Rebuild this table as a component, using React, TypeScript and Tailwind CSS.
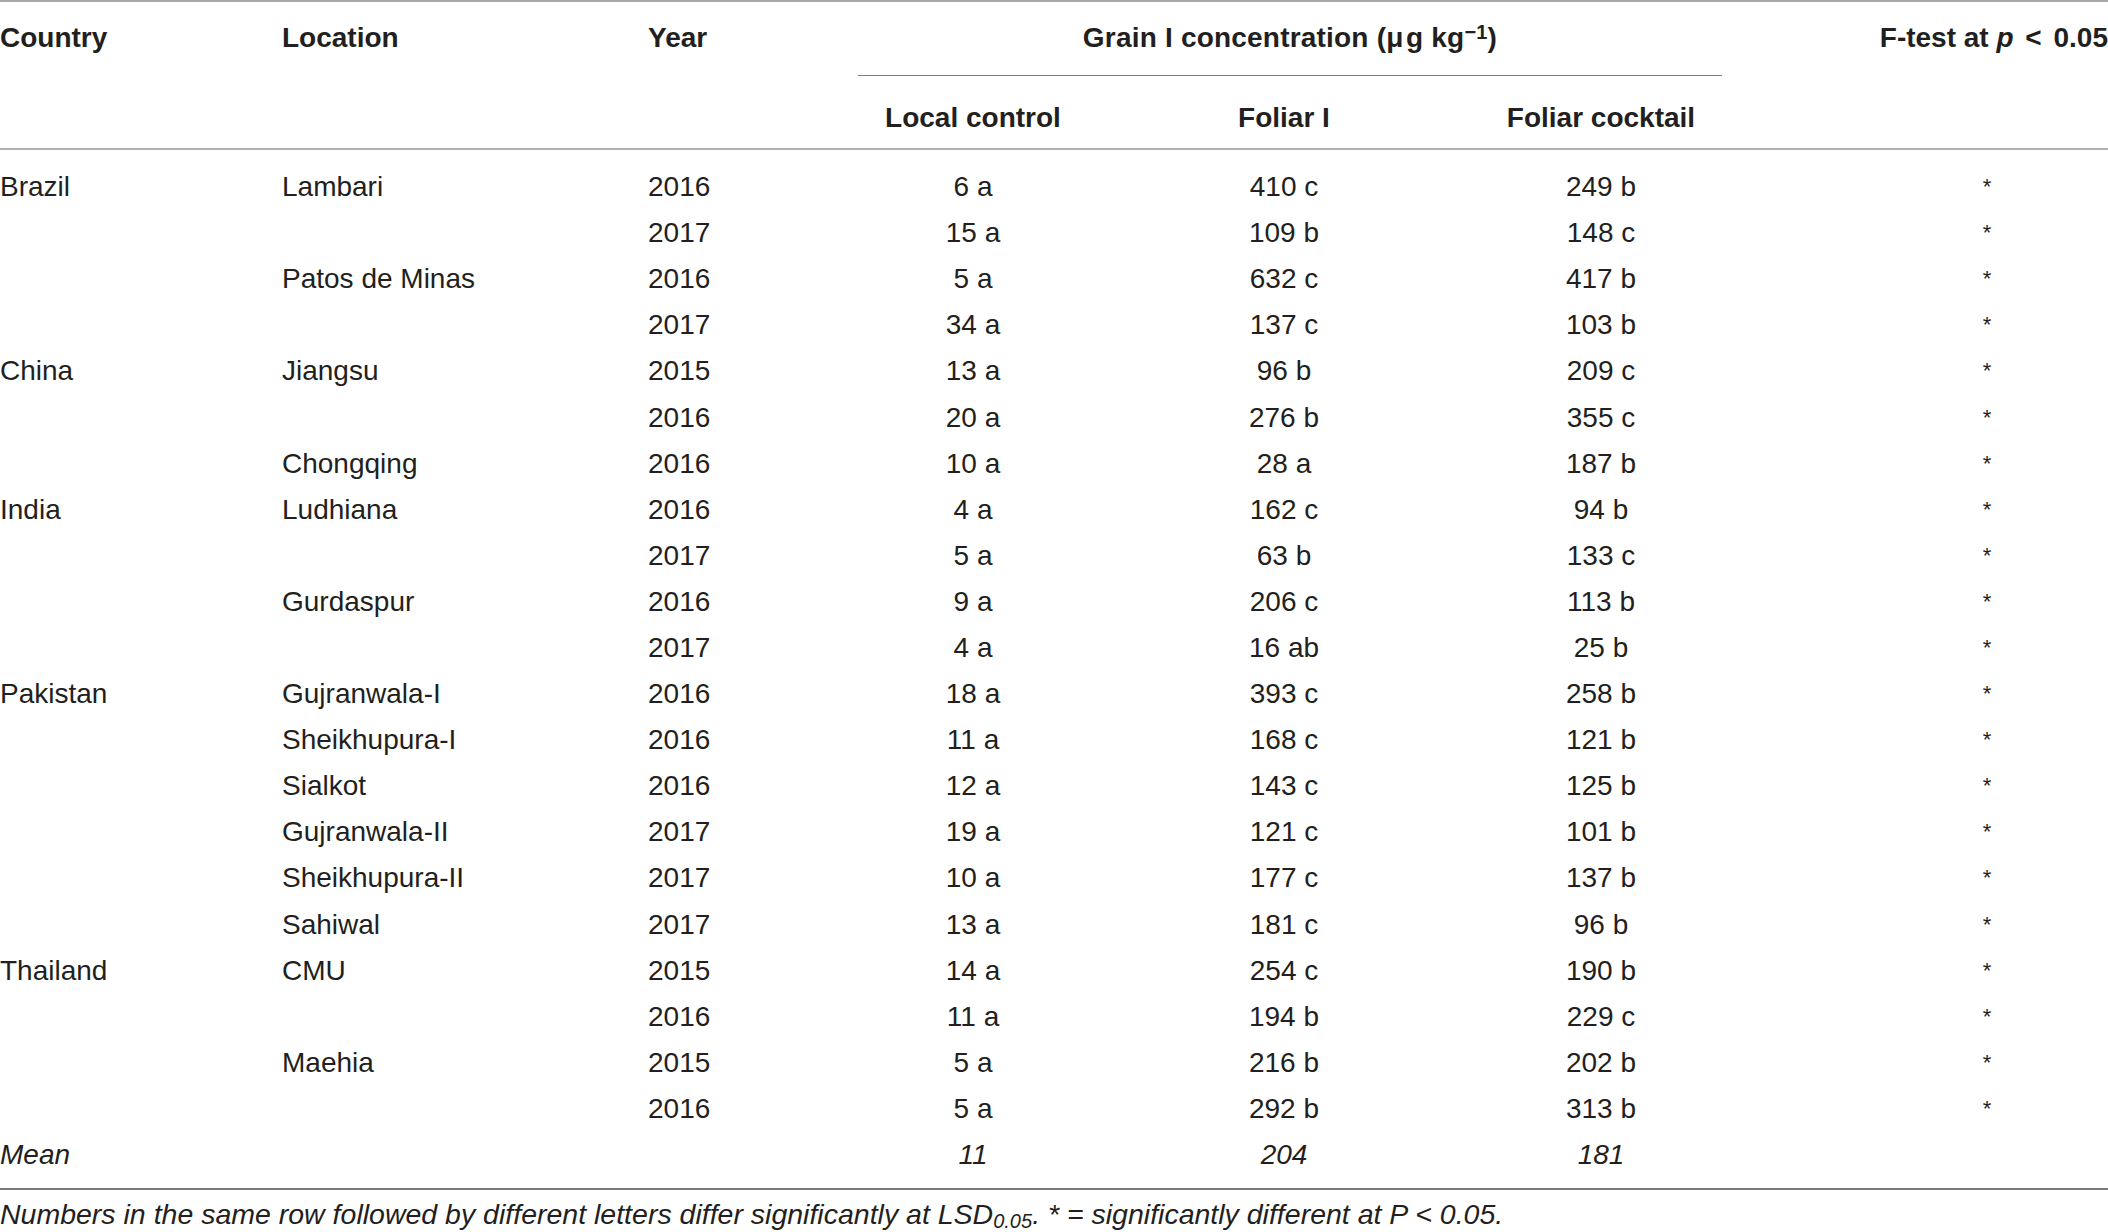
import React from 'react'

const rows: string[][] = [
    ['Brazil', 'Lambari', '2016', '6 a', '410 c', '249 b'],
    ['', '', '2017', '15 a', '109 b', '148 c'],
    ['', 'Patos de Minas', '2016', '5 a', '632 c', '417 b'],
    ['', '', '2017', '34 a', '137 c', '103 b'],
    ['China', 'Jiangsu', '2015', '13 a', '96 b', '209 c'],
    ['', '', '2016', '20 a', '276 b', '355 c'],
    ['', 'Chongqing', '2016', '10 a', '28 a', '187 b'],
    ['India', 'Ludhiana', '2016', '4 a', '162 c', '94 b'],
    ['', '', '2017', '5 a', '63 b', '133 c'],
    ['', 'Gurdaspur', '2016', '9 a', '206 c', '113 b'],
    ['', '', '2017', '4 a', '16 ab', '25 b'],
    ['Pakistan', 'Gujranwala-I', '2016', '18 a', '393 c', '258 b'],
    ['', 'Sheikhupura-I', '2016', '11 a', '168 c', '121 b'],
    ['', 'Sialkot', '2016', '12 a', '143 c', '125 b'],
    ['', 'Gujranwala-II', '2017', '19 a', '121 c', '101 b'],
    ['', 'Sheikhupura-II', '2017', '10 a', '177 c', '137 b'],
    ['', 'Sahiwal', '2017', '13 a', '181 c', '96 b'],
    ['Thailand', 'CMU', '2015', '14 a', '254 c', '190 b'],
    ['', '', '2016', '11 a', '194 b', '229 c'],
    ['', 'Maehia', '2015', '5 a', '216 b', '202 b'],
    ['', '', '2016', '5 a', '292 b', '313 b'],
]

// 열 너비 (합계 2108px)
const cols = 'grid grid-cols-[282px_366px_210px_230px_392px_242px_386px]'

export default function App() {
    return (
        <div className="w-[2108px] h-[1232px] bg-white overflow-hidden text-[#231f20] font-['Liberation_Sans',Arial,sans-serif]">
            {/* 헤더 */}
            <div className="border-t-2 border-[#a8a8a8]">
                <div className={`${cols} h-[74px] text-[28px] leading-[32px] font-bold`}>
                    <div className="pt-[20px]">Country</div>
                    <div className="pt-[20px]">Location</div>
                    <div className="pt-[20px]">Year</div>
                    <div className="col-span-3 border-b border-[#7d7d7d] pt-[20px] text-center tracking-[0.2px]">
                        Grain I concentration (μ&#8202;g kg
                        <span className="text-[20px] align-top relative -top-[6px]">−1</span>)
                    </div>
                    <div className="pt-[20px] text-right whitespace-nowrap">
                        F-test at <i>p</i> <span className="px-[4px]">&lt;</span> 0.05
                    </div>
                </div>
                <div className={`${cols} h-[74px] text-[28px] leading-[32px] font-bold border-b-2 border-[#b0b0b0]`}>
                    <div />
                    <div />
                    <div />
                    <div className="pt-[26px] text-center">Local control</div>
                    <div className="pt-[26px] text-center">Foliar I</div>
                    <div className="pt-[26px] text-center">Foliar cocktail</div>
                    <div />
                </div>
            </div>

            {/* 본문 */}
            <div className="pt-[14px] pb-[10px] border-b-2 border-[#7a7a7a] text-[28px]">
                {rows.map((r, i) => (
                    <div key={i} className={`${cols} h-[46.1px] items-center leading-[32px]`}>
                        <div>{r[0]}</div>
                        <div>{r[1]}</div>
                        <div>{r[2]}</div>
                        <div className="text-center">{r[3]}</div>
                        <div className="text-center">{r[4]}</div>
                        <div className="text-center">{r[5]}</div>
                        <div className="pl-[144px] text-center text-[22px]">*</div>
                    </div>
                ))}
                <div className={`${cols} h-[46.1px] items-center leading-[32px] italic`}>
                    <div>Mean</div>
                    <div />
                    <div />
                    <div className="text-center">11</div>
                    <div className="text-center">204</div>
                    <div className="text-center">181</div>
                    <div />
                </div>
            </div>

            {/* 각주 */}
            <p className="pt-[10px] text-[28.5px] leading-[28px] italic whitespace-nowrap">
                Numbers in the same row followed by different letters differ significantly at LSD
                <span className="text-[20px] relative top-[4px]">0.05</span>. * = significantly different at P &lt; 0.05.
            </p>
        </div>
    )
}
